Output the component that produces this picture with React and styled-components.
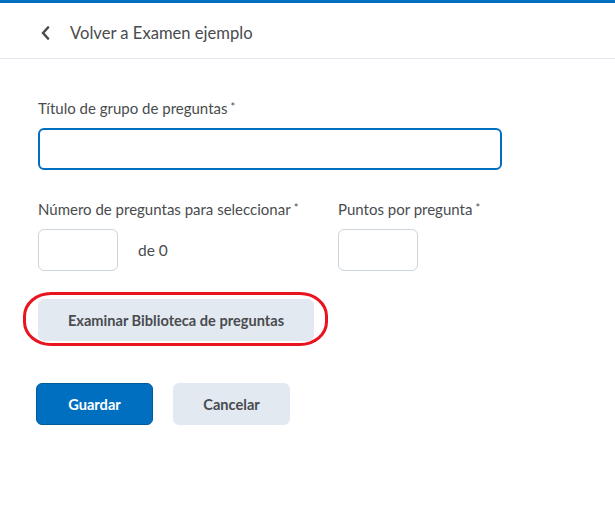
import React from "react";
import styled, { createGlobalStyle } from "styled-components";

const GlobalStyle = createGlobalStyle`
  body {
    margin: 0;
    background: #ffffff;
    font-family: Lato, "Open Sans", sans-serif;
    color: #494c4e;
  }
`;

const Page = styled.div`
  width: 615px;
  min-height: 514px;
  border-top: 3px solid #006fbf;
  box-sizing: border-box;
`;

const Header = styled.div`
  height: 56px;
  display: flex;
  align-items: center;
  padding: 5px 0 0 40px;
  border-bottom: 1px solid #e3e9f1;
  box-sizing: border-box;
  gap: 20px;
  font-size: 16.6px;
  color: #494c4e;
`;

const Content = styled.div`
  padding: 39px 0 0 38px;
  display: flex;
  flex-direction: column;
`;

const Field = styled.div`
  display: flex;
  flex-direction: column;
  gap: 10px;
`;

const Label = styled.label`
  font-size: 15px;
  line-height: 20px;
  color: #494c4e;

  sup {
    font-size: 11px;
    vertical-align: top;
    margin-left: 3px;
    position: relative;
    top: -1px;
  }
`;

const TextInput = styled.input`
  box-sizing: border-box;
  width: ${(p) => p.$width}px;
  height: 42px;
  border: ${(p) => (p.$focused ? "2px solid #006fbf" : "1px solid #cdd5dc")};
  border-radius: 6px;
  outline: none;
  font-family: inherit;
  font-size: 15px;
  padding: 0 12px;
`;

const Row = styled.div`
  display: flex;
  margin-top: 29px;
`;

const Column = styled(Field)`
  width: ${(p) => p.$width}px;
`;

const InlineRow = styled.div`
  display: flex;
  align-items: center;
  gap: 20px;
  font-size: 15.5px;
`;

const Annotated = styled.div`
  position: relative;
  align-self: flex-start;
  margin-top: 28px;

  &::after {
    content: "";
    position: absolute;
    left: -15px;
    top: -7px;
    right: -14px;
    bottom: -5px;
    border: 3.5px solid #e8141f;
    border-radius: 28px / 24px;
    pointer-events: none;
  }
`;

const Button = styled.button`
  box-sizing: border-box;
  height: 42px;
  width: ${(p) => p.$width}px;
  padding: 0;
  border-radius: 6px;
  font-family: inherit;
  font-size: 14.6px;
  font-weight: 700;
  cursor: pointer;
  border: 1px solid ${(p) => (p.$primary ? "#005a9c" : "#e3e9f1")};
  background: ${(p) => (p.$primary ? "#006fbf" : "#e3e9f1")};
  color: ${(p) => (p.$primary ? "#ffffff" : "#494c4e")};
`;

const Actions = styled.div`
  display: flex;
  gap: 20px;
  margin-top: 42px;
  margin-left: -2px;
`;

const Chevron = () => (
  <svg width="10" height="14" viewBox="0 0 10 14">
    <path
      d="M8 1.5 L3 7 L8 12.5"
      fill="none"
      stroke="#494c4e"
      strokeWidth="2.6"
      strokeLinecap="round"
      strokeLinejoin="round"
    />
  </svg>
);

export default function App() {
  return (
    <>
      <GlobalStyle />
      <Page>
        <Header>
          <Chevron />
          <span>Volver a Examen ejemplo</span>
        </Header>
        <Content>
          <Field>
            <Label>
              Título de grupo de preguntas<sup>*</sup>
            </Label>
            <TextInput $width={464} $focused />
          </Field>

          <Row>
            <Column $width={300}>
              <Label>
                Número de preguntas para seleccionar<sup>*</sup>
              </Label>
              <InlineRow>
                <TextInput $width={80} />
                <span>de 0</span>
              </InlineRow>
            </Column>
            <Column $width={200}>
              <Label>
                Puntos por pregunta<sup>*</sup>
              </Label>
              <TextInput $width={80} />
            </Column>
          </Row>

          <Annotated>
            <Button $width={276}>Examinar Biblioteca de preguntas</Button>
          </Annotated>

          <Actions>
            <Button $primary $width={117}>Guardar</Button>
            <Button $width={117}>Cancelar</Button>
          </Actions>
        </Content>
      </Page>
    </>
  );
}
